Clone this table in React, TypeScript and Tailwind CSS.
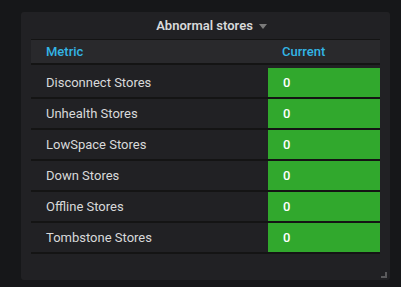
/**
 * Panneau "Abnormal stores" — table metric / current
 */

const rows = [
  { name: 'Disconnect Stores', value: 0 },
  { name: 'Unhealth Stores', value: 0 },
  { name: 'LowSpace Stores', value: 0 },
  { name: 'Down Stores', value: 0 },
  { name: 'Offline Stores', value: 0 },
  { name: 'Tombstone Stores', value: 0 },
]

export default function App() {
  return (
    <div className="w-[401px] h-[287px] bg-[#161719] pl-[21px] pt-[12px] font-['Roboto',sans-serif]">
      <div className="w-[369px] h-[268px] bg-[#212124] rounded-[3px] flex flex-col px-[10px] relative">
        {/* Title */}
        <div className="h-[27px] flex items-center justify-center gap-[6px] pt-[1px] pl-[12px]">
          <span className="text-[13px] font-semibold text-[#d8d9da]">Abnormal stores</span>
          <svg width="8" height="5" viewBox="0 0 8 5" className="mt-[1px]">
            <path d="M0 0h8L4 5z" fill="#7b7b7b" />
          </svg>
        </div>

        {/* Header */}
        <div className="flex h-[26px] border-t-[1px] border-b-2 border-[#141414] bg-[#29292c] text-[13px] font-medium text-[#33b5e5]">
          <div className="w-[237px] pl-[15px] flex items-center">Metric</div>
          <div className="flex-1 pl-[14px] flex items-center">Current</div>
        </div>

        {/* Rows */}
        <div className="mt-[3px] flex flex-col">
          {rows.map(r => (
            <div key={r.name} className="flex h-[31px] border-b-2 border-[#141414] text-[13px]">
              <div className="w-[237px] pl-[15px] flex items-center text-[#d8d9da]">{r.name}</div>
              <div className="flex-1 pl-[15px] flex items-center bg-[#31a82d] text-white font-medium">{r.value}</div>
            </div>
          ))}
        </div>

        {/* Resize handle */}
        <svg width="6" height="6" viewBox="0 0 6 6" className="absolute right-[3px] bottom-[2px]">
          <path d="M4 0h2v6H0V4h4z" fill="#5a5a5c" />
        </svg>
      </div>
    </div>
  )
}
